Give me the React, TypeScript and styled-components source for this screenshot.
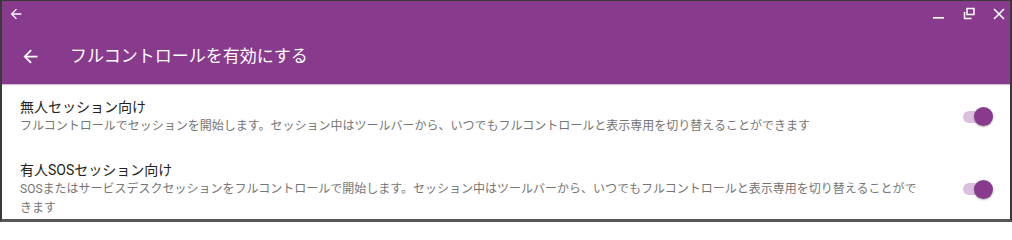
import styled, { createGlobalStyle } from "styled-components";

const PURPLE = "#883a8d";

const GlobalStyle = createGlobalStyle`
  html, body {
    margin: 0;
    padding: 0;
    background: #ffffff;
    overflow: hidden;
  }

  body {
    font-family: Roboto, "Noto Sans CJK JP", sans-serif;
  }
`;

const settings = [
  {
    title: "無人セッション向け",
    description:
      "フルコントロールでセッションを開始します。セッション中はツールバーから、いつでもフルコントロールと表示専用を切り替えることができます",
  },
  {
    title: "有人SOSセッション向け",
    description:
      "SOSまたはサービスデスクセッションをフルコントロールで開始します。セッション中はツールバーから、いつでもフルコントロールと表示専用を切り替えることができます",
  },
];

function BackArrow({ size }: { size: number }) {
  return (
    <svg width={size} height={size} viewBox="0 0 24 24" fill="#ffffff">
      <path d="M20 11H7.83l5.59-5.59L12 4l-8 8 8 8 1.41-1.41L7.83 13H20v-2z" />
    </svg>
  );
}

function MinimizeIcon() {
  return (
    <svg width="14" height="14" viewBox="0 0 14 14">
      <rect x="1" y="10" width="11" height="1.6" fill="#ffffff" />
    </svg>
  );
}

function RestoreIcon() {
  return (
    <svg width="14" height="14" viewBox="0 0 14 14" fill="none" stroke="#ffffff" strokeWidth="1.5">
      <rect x="5" y="1.5" width="7" height="6" />
      <path d="M2.5 5v6.5h7" />
    </svg>
  );
}

function CloseIcon() {
  return (
    <svg width="14" height="14" viewBox="0 0 14 14" stroke="#ffffff" strokeWidth="1.6">
      <path d="M2 2l10 10M12 2L2 12" />
    </svg>
  );
}

function App() {
  return (
    <>
      <GlobalStyle />
      <Frame>
        <Header>
          <WindowBar>
            <SmallBack>
              <BackArrow size={16} />
            </SmallBack>
            <WindowControls>
              <ControlButton>
                <MinimizeIcon />
              </ControlButton>
              <ControlButton>
                <RestoreIcon />
              </ControlButton>
              <ControlButton>
                <CloseIcon />
              </ControlButton>
            </WindowControls>
          </WindowBar>
          <TitleBar>
            <TitleBack>
              <BackArrow size={21} />
            </TitleBack>
            <Title>フルコントロールを有効にする</Title>
          </TitleBar>
        </Header>

        <SettingsList>
          {settings.map((setting) => (
            <SettingRow key={setting.title}>
              <SettingText>
                <SettingTitle>{setting.title}</SettingTitle>
                <SettingDescription>{setting.description}</SettingDescription>
              </SettingText>
              <Toggle $on>
                <Thumb $on />
              </Toggle>
            </SettingRow>
          ))}
        </SettingsList>
      </Frame>
    </>
  );
}

const Frame = styled.div`
  box-sizing: border-box;
  width: 1012px;
  height: 222px;
  border-top: 1px solid #3a3a3a;
  border-left: 2px solid #3a3a3a;
  border-right: 2px solid #3a3a3a;
  border-bottom: 3px solid #575757;
  background: #ffffff;
  overflow: hidden;
`;

const Header = styled.header`
  background: ${PURPLE};
  height: 83px;
  display: flex;
  flex-direction: column;
  box-shadow: 0 1px 1px rgba(136, 58, 141, 0.35);
  position: relative;
`;

const WindowBar = styled.div`
  height: 28px;
  display: flex;
  align-items: center;
  justify-content: space-between;
`;

const SmallBack = styled.div`
  display: flex;
  padding-left: 6px;
  margin-top: -3px;
`;

const WindowControls = styled.div`
  display: flex;
  align-items: center;
  gap: 16px;
  padding-right: 4px;
  margin-top: -2px;
`;

const ControlButton = styled.div`
  display: flex;
  width: 14px;
  height: 14px;
`;

const TitleBar = styled.div`
  flex: 1;
  display: flex;
  align-items: center;
  padding-left: 18px;
  padding-bottom: 1px;
`;

const TitleBack = styled.div`
  display: flex;
  width: 50px;
`;

const Title = styled.h1`
  margin: 0;
  font-size: 17px;
  font-weight: 400;
  line-height: 24px;
  color: #ffffff;
`;

const SettingsList = styled.div`
  display: flex;
  flex-direction: column;
  gap: 24px;
  padding-top: 13px;
`;

const SettingRow = styled.div`
  display: flex;
  align-items: center;
  padding: 0 17px 0 18px;
`;

const SettingText = styled.div`
  flex: 0 0 905px;
  display: flex;
  flex-direction: column;
`;

const SettingTitle = styled.div`
  font-size: 14px;
  line-height: 20px;
  color: #222222;
`;

const SettingDescription = styled.div`
  font-size: 12px;
  line-height: 19px;
  color: #757575;
`;

const Toggle = styled.div<{ $on?: boolean }>`
  margin-left: auto;
  width: 30px;
  height: 12px;
  border-radius: 6px;
  background: ${(p) => (p.$on ? "#dcbede" : "#bdbdbd")};
  display: flex;
  align-items: center;
  justify-content: ${(p) => (p.$on ? "flex-end" : "flex-start")};
`;

const Thumb = styled.div<{ $on?: boolean }>`
  width: 19px;
  height: 19px;
  border-radius: 50%;
  flex: none;
  background: ${(p) => (p.$on ? PURPLE : "#f5f5f5")};
  box-shadow: 0 1px 2px rgba(0, 0, 0, 0.3);
`;

export default App;
